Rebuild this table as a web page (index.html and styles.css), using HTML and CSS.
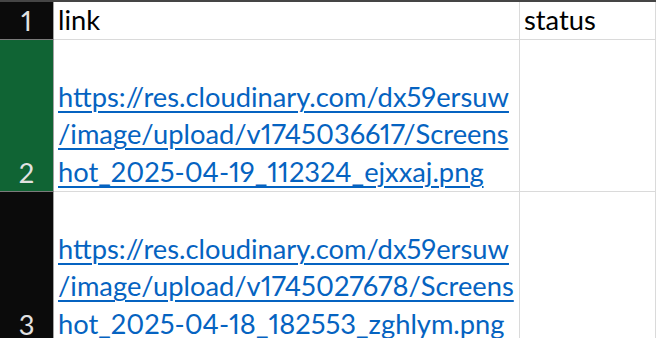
FILE: index.html
```html
<!DOCTYPE html>
<html lang="en">
<head>
<meta charset="utf-8">
<title>Sheet</title>
<link rel="stylesheet" href="styles.css">
</head>
<body>
<div class="sheet">
  <div class="rh">1</div>
  <div class="cell">link</div>
  <div class="cell">status</div>

  <div class="rh rh-sel">2</div>
  <div class="cell"><a class="lnk" href="#"><span class="ln">https://res.cloudinary.com/dx59ersuw</span><span class="ln">/image/upload/v1745036617/Screens</span><span class="ln">hot_2025-04-19_112324_ejxxaj.png</span></a></div>
  <div class="cell"></div>

  <div class="rh">3</div>
  <div class="cell"><a class="lnk" href="#"><span class="ln">https://res.cloudinary.com/dx59ersuw</span><span class="ln">/image/upload/v1745027678/Screens</span><span class="ln">hot_2025-04-18_182553_zghlym.png</span></a></div>
  <div class="cell"></div>
</div>
</body>
</html>
```
FILE: styles.css
```css
* { box-sizing: border-box; }
html, body { margin: 0; padding: 0; background: #ffffff; }
body { font-family: Lato, "Open Sans", sans-serif; font-size: 27.3px; color: #000; overflow: hidden; font-variant-numeric: proportional-nums; }

.sheet {
  display: grid;
  grid-template-columns: 54px 466px 136px;
  grid-template-rows: 38px 152px 152px;
  width: 656px;
  border-top: 2px solid #454545;
}

.rh {
  background: #0b0b0b;
  color: #e2e2e2;
  border-right: 1px solid #a3a3a3;
  border-bottom: 1px solid #7a7a7a;
  display: flex;
  align-items: flex-end;
  justify-content: center;
  line-height: 36px;
}
.rh-sel { background: #106434; }

.cell {
  border-right: 1px solid #dadada;
  border-bottom: 1px solid #dadada;
  display: flex;
  align-items: flex-end;
  padding: 0 0 1px 4px;
  line-height: 36px;
  white-space: nowrap;
  overflow: hidden;
}

.lnk {
  color: #0563c1;
  text-decoration: underline;
  text-decoration-thickness: 2px;
  text-underline-offset: 4px;
  line-height: 37.5px;
}
.ln { display: block; }
```
